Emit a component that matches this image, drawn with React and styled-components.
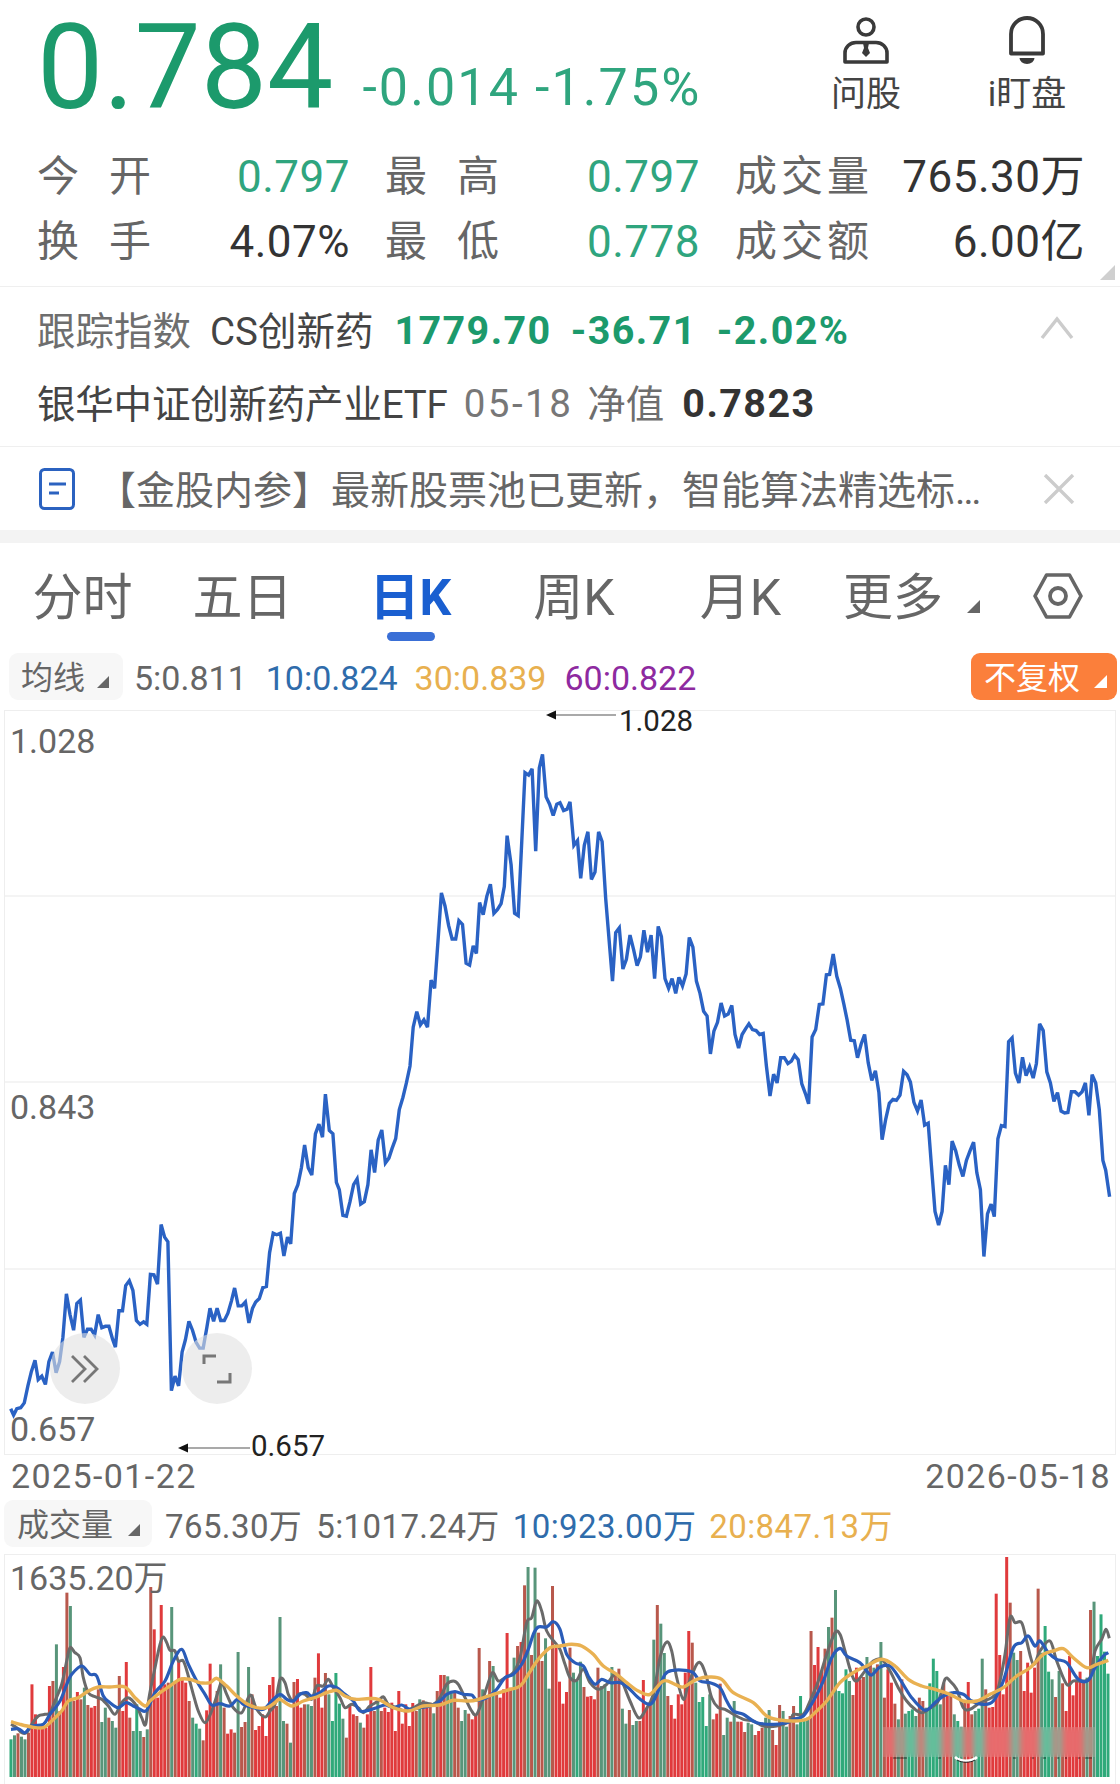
import React from "react";
import styled, { createGlobalStyle } from "styled-components";

const GlobalStyle = createGlobalStyle`
  html, body { margin: 0; padding: 0; background: #fff; }
  body { font-family: Roboto, "Noto Sans CJK SC", sans-serif; }
`;

const GREEN = "#2fa57e";
const DEEP_GREEN = "#1c9a6c";
const BLUE = "#2a62c4";

const priceA = [30,1462,38,1475,47,1462,58,1460,68,1450,78,1415,88,1385,98,1362,107,1402,117,1395,127,1412,137,1365,147,1345,157,1388,167,1365,176,1315,186,1225,196,1268,206,1300,215,1245,225,1238,235,1315,245,1298,255,1298,265,1310,275,1268,285,1295,295,1292,305,1292,315,1318,323,1335,333,1260,343,1260,352,1208,362,1198,372,1218,382,1280,392,1288,402,1283,411,1288,421,1185,431,1186,441,1205,451,1082,461,1108,470,1118,480,1425,490,1395,500,1415,510,1345,519,1320,529,1282,539,1300,549,1325,559,1337,569,1337,579,1295,588,1255,598,1282,608,1255,618,1280,628,1280,638,1265,648,1240,657,1213,667,1250,677,1250,687,1242,697,1285,707,1255,716,1242,726,1235,736,1212,746,1210,755,1140,765,1100,775,1103,785,1100,795,1147,805,1108,814,1122,824,1018,834,1000,844,965,853,918,863,965,873,980,883,895,893,875,903,902,911,813,922,888,932,895,942,995,950,1010,960,1063,970,1065,980,1035,990,1000,1000,988,1010,1040,1020,1035,1030,1000,1039,928,1049,975,1059,908,1069,887,1079,955,1089,945,1098,925,1108,905,1118,845,1128,820,1138,790,1148,755,1157,675,1167,643,1177,670,1187,660,1197,675,1207,578,1217,595,1226,500,1236,398,1246,425,1256,465,1266,493,1276,493,1285,455,1295,463,1305,543,1315,547,1325,507,1334,523,1343,418,1353,443,1363,405,1373,380,1383,440,1393,432,1403,420,1412,385,1420,280,1431,340,1441,440,1451,445,1461,290,1470,150,1480,155,1490,142,1500,312,1510,140,1519,112,1529,200,1539,215,1549,238,1559,215];
const priceB = [0,212,10,228,20,225,28,210,39,300,49,290,58,368,68,300,78,272,88,370,98,355,108,272,118,292,128,410,137,490,147,580,156,480,166,470,176,555,186,535,196,485,206,515,216,548,225,530,235,475,245,520,255,485,265,575,275,467,284,488,294,575,304,595,314,575,324,605,333,572,343,590,353,565,362,490,372,510,382,580,392,605,402,642,412,652,421,730,431,683,441,665,451,625,461,652,471,648,481,630,490,690,500,718,510,690,520,678,529,668,539,680,549,682,559,690,569,688,578,755,588,817,598,772,608,790,618,738,628,738,638,750,648,745,657,733,667,742,677,792,687,812,696,833,706,695,716,680,726,628,736,627,746,567,755,566,765,524,775,570,785,595,795,628,804,660,814,702,824,703,833,738,843,710,853,690,863,748,873,785,883,765,893,810,902,907,912,865,922,832,932,824,942,826,952,815,962,766,972,773,981,788,991,830,1001,848,1011,825,1021,877,1031,873,1040,960,1050,1055,1060,1083,1070,1055,1079,960,1089,1000,1098,910,1108,930,1118,960,1128,983,1138,950,1148,930,1158,912,1167,975,1177,1010,1187,1148,1197,1060,1207,1040,1216,1066,1226,905,1236,878,1246,880,1256,705,1266,697,1275,770,1285,790,1295,737,1305,775,1315,757,1325,780,1334,750,1343,668,1353,682,1363,767,1373,790,1383,828,1393,810,1403,848,1413,852,1422,851,1432,808,1442,808,1452,815,1462,808,1471,790,1481,857,1490,773,1500,790,1510,845,1520,950,1528,970,1539,1025];

const pricePoints = [];
for (let i = 0; i < priceA.length; i += 2) pricePoints.push(`${(priceA[i] / 2.8).toFixed(1)},${(700 + priceA[i + 1] / 2.063).toFixed(1)}`);
for (let i = 0; i < priceB.length; i += 2) pricePoints.push(`${(560 + priceB[i] / 2.8).toFixed(1)},${(700 + priceB[i + 1] / 2.063).toFixed(1)}`);

// bar tops as read in 3x crops of the volume panel; negative means a falling (green) day
const bars = [
  -565,-553,547,-557,-565,545,400,490,525,525,530,405,390,-280,480,348,125,-165,450,423,445,-410,462,470,465,415,-513,-470,500,-510,-530,375,480,333,500,-540,-460,-540,558,-535,108,235,440,162,400,395,-168,390,330,380,395,450,-500,-518,-533,568,478,338,460,420,-340,470,548,535,545,-303,528,513,-348,430,537,525,490,555,402,378,465,-198,
  -510,518,-575,393,384,470,460,-460,-465,380,307,470,366,-430,-510,-366,-458,-503,560,460,490,495,-515,530,490,348,480,-450,480,470,483,455,540,420,518,460,525,456,480,-445,448,455,455,-487,420,372,372,-376,-420,420,470,-510,-477,488,505,490,291,-415,435,330,-345,430,440,415,246,410,-320,285,273,103,-48,312,-50,245,330,-262,-413,105,290,392,
  458,423,290,-365,-390,-332,408,437,435,445,350,-405,-400,420,-348,375,353,-473,-518,477,-522,-510,510,387,470,458,-266,162,-218,-306,435,462,503,430,460,365,240,275,-395,-453,-438,-525,-430,505,488,398,-552,-500,512,-450,512,512,543,-515,-520,552,540,530,-500,-477,537,582,462,-480,-527,495,465,-520,-435,-510,-500,240,342,288,360,293,-228,200,-117,-420,
  -427,-355,-390,432,350,385,378,-318,340,-350,340,-273,440,355,395,458,-505,385,-488,-480,-475,-495,440,450,-470,-397,-323,-360,-460,395,435,430,-490,-510,-527,455,393,490,-480,-473,-323,415,470,468,128,312,430,18,155,-305,-327,300,420,335,425,350,113,-305,-225,-362,-385,438,-360,397,480,315,433,390,362,395,-380,177,-152,-315,-190,-302,-368,
];
const BAR_START = 11;
const BAR_PITCH = (1108 - BAR_START) / (bars.length - 1);

// colour bleeds between neighbouring bars of opposite direction in the reference
function barColour(i) {
  const down = bars[i] < 0;
  const mixed = (bars[i - 1] !== undefined && bars[i - 1] < 0 !== down) || (bars[i + 1] !== undefined && bars[i + 1] < 0 !== down);
  if (down) return mixed ? "#58957a" : "#2fa97a";
  return mixed ? "#b8584c" : "#e03a3c";
}

const volGray = [
  [33,520,50,530,65,545,80,545,95,520,115,495,135,490,150,485,165,450,185,400,200,330,210,290,225,305,240,320,250,380,265,425,285,437,305,445,325,465,345,490,365,455,385,440,410,465,425,500,437,520,447,440,465,350,480,280,490,258,500,275,510,298,525,300,535,330,550,330,565,375,580,430,595,480,615,515,635,480,655,420,665,395,680,430,700,470,725,485,745,440,755,435,770,475,795,498,810,480,825,460],
  [0,385,15,395,25,430,40,450,55,430,75,430,95,445,110,405,130,405,145,385,160,410,180,440,195,470,215,460,235,470,250,485,270,465,295,450,310,437,325,460,350,470,375,480,400,470,430,455,460,460,480,440,500,400,520,390,535,400,555,440,575,480,590,490,610,440,630,380,640,365,655,390,675,380,700,365,720,320,740,215,755,200,770,150,785,180,800,240,825,275],
  [0,295,15,340,30,380,50,388,70,355,90,395,115,415,140,400,165,370,185,390,210,450,235,500,255,480,280,430,300,320,320,273,335,300,350,380,370,445,385,400,410,340,425,340,440,380,455,440,475,470,495,475,520,490,550,505,580,510,610,525,650,525,690,510,700,490,730,490,750,450,775,390,800,310,825,245],
  [0,250,15,300,35,370,50,390,75,360,100,330,125,325,150,360,175,410,200,450,225,475,245,485,265,475,295,450,315,385,330,390,350,415,370,470,390,475,420,455,455,440,475,410,495,310,510,200,525,215,545,215,560,270,580,340,600,300,630,270,650,330,680,400,700,390,725,390,750,380,765,300,785,265,798,235,808,262],
];
const volBlue = [
  [33,535,55,533,75,545,95,525,130,520,150,490,180,450,200,400,215,370,245,345,270,370,290,375,310,435,330,455,355,470,378,455,400,465,420,475,440,478,465,425,495,390,520,330,545,295,565,340,590,390,615,430,635,462,660,458,690,465,712,445,730,460,760,470,790,475,815,450],
  [0,430,20,445,40,450,60,430,80,425,95,435,120,425,145,405,170,410,195,430,220,450,240,480,265,478,290,470,315,462,340,470,365,462,390,475,420,470,450,465,480,450,500,430,525,422,550,430,575,432,590,447,620,440,650,415,675,380,700,370,725,340,745,295,760,250,775,228,800,228,820,212],
  [0,235,20,310,45,335,70,345,85,375,105,400,125,385,150,395,180,395,205,410,235,440,270,460,290,430,315,370,340,358,375,358,400,365,420,390,450,395,480,410,500,450,520,480,550,490,590,515,640,520,680,515,700,505,730,495,760,450,790,390,815,320],
  [0,292,20,315,60,335,80,360,95,372,120,348,150,345,180,385,215,440,255,478,285,455,310,435,340,425,370,430,395,450,430,460,460,450,490,390,520,290,545,275,565,255,585,285,600,270,625,305,650,325,680,335,715,385,745,388,765,350,790,315,805,305],
];
const volOrange = [
  [33,512,60,520,95,528,130,530,155,510,185,480,205,450,235,440,265,420,295,408,330,408,375,408,405,440,435,465,450,450,480,425,510,405,540,385,570,385,600,395,630,395,650,382,680,405,710,435,740,458,770,470,800,470,825,455],
  [0,445,35,465,70,450,110,438,140,425,170,418,195,435,225,445,260,443,295,445,340,470,385,480,430,465,480,462,520,448,560,450,590,447,640,430,680,418,720,405,745,370,775,325,810,290],
  [0,285,35,280,65,285,100,310,130,345,170,370,200,395,235,420,270,430,310,390,345,400,370,408,410,385,450,378,485,385,520,425,580,455,620,495,660,507,700,510,740,505,770,480,800,450],
  [0,395,40,365,80,345,125,325,165,345,205,385,245,405,285,415,330,430,370,450,410,450,450,430,490,410,530,375,570,350,610,310,640,300,670,293,700,320,740,350,770,340,805,328],
];

function smoothPath(crops) {
  const pts = [];
  crops.forEach((crop, c) => {
    for (let i = 0; i < crop.length; i += 2) pts.push([c * 280 + crop[i] / 3, 1550 + crop[i + 1] / 3]);
  });
  let d = `M${pts[0][0].toFixed(1)} ${pts[0][1].toFixed(1)}`;
  for (let i = 0; i < pts.length - 1; i++) {
    const p0 = pts[Math.max(i - 1, 0)], p1 = pts[i], p2 = pts[i + 1], p3 = pts[Math.min(i + 2, pts.length - 1)];
    const c1 = [p1[0] + (p2[0] - p0[0]) / 6, p1[1] + (p2[1] - p0[1]) / 6];
    const c2 = [p2[0] - (p3[0] - p1[0]) / 6, p2[1] - (p3[1] - p1[1]) / 6];
    d += `C${c1[0].toFixed(1)} ${c1[1].toFixed(1)} ${c2[0].toFixed(1)} ${c2[1].toFixed(1)} ${p2[0].toFixed(1)} ${p2[1].toFixed(1)}`;
  }
  return d;
}

const Page = styled.div`
  width: 1120px;
  height: 1784px;
  overflow: hidden;
  position: relative;
  background: #fff;
  color: #333;
`;

const HeadRow = styled.header`
  height: 144px;
  display: flex;
  align-items: flex-start;
  padding-left: 37px;
`;
const Price = styled.div`
  flex: none;
  font-size: 118px;
  line-height: 136px;
  color: ${DEEP_GREEN};
`;
const Change = styled.div`
  flex: none;
  margin: 58px 0 0 29px;
  font-size: 52px;
  line-height: 60px;
  color: ${GREEN};
  letter-spacing: 2.1px;
  white-space: pre;
`;
const QuickActions = styled.div`
  margin-left: auto;
  display: flex;
`;
const QuickAction = styled.div`
  width: ${(p) => p.$w}px;
  display: flex;
  flex-direction: column;
  align-items: center;
  padding-top: 15px;
  font-size: 35px;
  line-height: 46px;
  color: #444;
  svg { display: block; margin-bottom: 7px; }
`;

const Stats = styled.section`
  position: relative;
  height: 142px;
  border-bottom: 1px solid #efefef;
  box-sizing: content-box;
  padding: 0 37px;
  display: grid;
  grid-template-columns: 310px 312px 347px;
  column-gap: 38px;
  grid-auto-rows: 65px;
`;
const Stat = styled.div`
  display: flex;
  align-items: center;
  justify-content: space-between;
  white-space: nowrap;
`;
const StatLabel = styled.span`
  width: ${(p) => (p.$wide ? 134 : 114)}px;
  margin-bottom: 8px;
  font-size: 42px;
  color: #666;
  text-align-last: justify;
`;
const StatValue = styled.span`
  font-size: 44px;
  line-height: 52px;
  letter-spacing: 0.5px;
  margin-right: -3px;
  color: ${(p) => (p.$green ? GREEN : "#333")};
`;
const Corner = styled.i`
  position: absolute;
  display: block;
  right: ${(p) => p.$right}px;
  bottom: ${(p) => p.$bottom}px;
  width: ${(p) => p.$size}px;
  height: ${(p) => p.$size}px;
  background: ${(p) => p.$color};
  clip-path: polygon(100% 0, 100% 100%, 0 100%);
`;

const IndexBlock = styled.section`
  height: 160px;
  padding: 7px 37px 0;
  box-sizing: border-box;
  border-bottom: 1px solid #efefef;
`;
const IndexRow = styled.div`
  height: 73px;
  display: flex;
  align-items: center;
  font-size: 38.5px;
  white-space: pre;
`;
const Words = styled.span`
  color: ${(p) => p.$color || "#6e6e6e"};
  margin-left: ${(p) => p.$ml || 0}px;
  margin-bottom: ${(p) => (p.$digits ? 0 : 6)}px;
  letter-spacing: ${(p) => p.$ls || 0}px;
`;
const Figure = styled.b`
  font-weight: 700;
  font-size: 39.5px;
  margin-left: ${(p) => p.$ml || 0}px;
  color: ${(p) => p.$color};
  letter-spacing: 1.4px;
`;
const Chevron = styled.svg`
  margin-left: auto;
  margin-right: 8px;
  margin-bottom: 6px;
`;

const Notice = styled.section`
  height: 83px;
  box-sizing: border-box;
  padding-left: 39px;
  display: flex;
  align-items: center;
  font-size: 39px;
  color: #666;
  white-space: nowrap;
`;
const NoticeText = styled.span`
  margin: 0 0 4px 22px;
  width: 946px;
`;
const Band = styled.div`
  height: 13px;
  background: #f3f3f3;
`;

const Tabs = styled.nav`
  position: relative;
  height: 102px;
  display: grid;
  grid-template-columns: 165px 155px 181px 146px 187px 199px 1fr;
  align-items: center;
  font-size: 50px;
  padding-bottom: 2px;
  box-sizing: border-box;
  color: #666;
`;
const Tab = styled.div`
  position: relative;
  text-align: ${(p) => (p.$left ? "left" : "center")};
  padding-left: ${(p) => (p.$left ? 9 : 0)}px;
  color: ${(p) => (p.$active ? "#1a5fd0" : "#666")};
  font-weight: ${(p) => (p.$active ? 700 : 400)};
`;
const ActiveBar = styled.i`
  position: absolute;
  left: 50%;
  bottom: -12px;
  transform: translateX(-50%);
  width: 48px;
  height: 9px;
  border-radius: 5px;
  background: #3a6fd6;
`;
const SettingsIcon = styled.svg`
  display: block;
  margin-top: 6px;
`;

const Legend = styled.div`
  height: 47px;
  display: flex;
  align-items: center;
  padding-left: ${(p) => p.$pl}px;
  font-size: ${(p) => p.$fs}px;
  margin-top: ${(p) => p.$mt}px;
  white-space: nowrap;
`;
const Chip = styled.div`
  position: relative;
  width: ${(p) => p.$w}px;
  height: 47px;
  box-sizing: border-box;
  padding: 0 0 4px ${(p) => p.$pl}px;
  margin-right: ${(p) => p.$mr}px;
  display: flex;
  align-items: center;
  background: #f7f7f7;
  border-radius: 9px;
  color: #666;
  font-size: 32px;
`;
const Reading = styled.span`
  color: ${(p) => p.$color};
  margin-right: ${(p) => p.$mr}px;
  margin-top: ${(p) => p.$dy || 0}px;
  letter-spacing: ${(p) => p.$ls || 0}px;
`;
const AdjustButton = styled.div`
  position: relative;
  margin-left: auto;
  margin-right: 3px;
  width: 146px;
  height: 47px;
  box-sizing: border-box;
  padding: 0 0 4px 13px;
  display: flex;
  align-items: center;
  color: #fff;
  font-size: 32px;
  background: #fb7f3b;
  border-radius: 9px;
`;

const ChartPanel = styled.div`
  position: relative;
  margin: 10px 4px 0;
  height: 745px;
  box-sizing: border-box;
  border: 1px solid #eeeeee;
`;
const ChartSvg = styled.svg`
  position: absolute;
  left: -1px;
  top: -1px;
  display: block;
`;
const AxisLabel = styled.span`
  position: absolute;
  left: ${(p) => p.$x}px;
  top: ${(p) => p.$y}px;
  font-size: 34px;
  line-height: 36px;
  color: #666;
`;
const Mark = styled.span`
  position: absolute;
  left: ${(p) => p.$x}px;
  top: ${(p) => p.$y}px;
  font-size: 29.5px;
  line-height: 34px;
  color: #222;
`;
const RoundButton = styled.div`
  position: absolute;
  left: ${(p) => p.$x}px;
  top: ${(p) => p.$y}px;
  width: 70px;
  height: 71px;
  border-radius: 50%;
  background: rgba(225, 225, 225, 0.6);
  display: flex;
  align-items: center;
  justify-content: center;
`;

const Dates = styled.div`
  height: 42px;
  margin-bottom: 3px;
  padding: 0 9px 0 11px;
  display: flex;
  align-items: center;
  justify-content: space-between;
  font-size: 34px;
  letter-spacing: 1.4px;
  color: #666;
`;

const VolumePanel = styled.div`
  position: relative;
  margin: 7px 4px 0;
  height: 231px;
  box-sizing: border-box;
  border: 1px solid #eeeeee;
  border-bottom: none;
`;
const Smudge = styled.div`
  position: absolute;
  left: 878px;
  top: 172px;
  width: 212px;
  height: 30px;
  background: rgba(255, 255, 255, 0.12);
  backdrop-filter: blur(2.5px);
`;

function PersonIcon() {
  return (
    <svg width="48" height="50" viewBox="0 0 48 50">
      <circle cx="24" cy="12" r="8" fill="none" stroke="#3a3a3a" strokeWidth="3.6" />
      <path d="M3 47 V38 C3 32 8 27.5 14 27.5 H34 C40 27.5 45 32 45 38 V47 Z" fill="none" stroke="#3a3a3a" strokeWidth="3.6" strokeLinejoin="round" />
      <path d="M21 28 H27 L26 33 L28 38 L24 42 L20 38 L22 33 Z" fill="#3a3a3a" />
    </svg>
  );
}
function BellIcon() {
  return (
    <svg width="38" height="50" viewBox="0 0 38 50">
      <path d="M3 38.5 V19 A16 16 0 0 1 35 19 V38.5 Z" fill="none" stroke="#3a3a3a" strokeWidth="3.8" strokeLinejoin="round" />
      <path d="M11.5 43 H26.5 A7.5 6 0 0 1 11.5 43 Z" fill="#3a3a3a" />
    </svg>
  );
}
function DocIcon() {
  return (
    <svg width="36" height="42" viewBox="0 0 36 42">
      <rect x="1.5" y="1.5" width="33" height="39" rx="4" fill="none" stroke="#2b62c0" strokeWidth="3" />
      <path d="M10 16 H27 M10 25 H20" stroke="#2b62c0" strokeWidth="3" />
    </svg>
  );
}
function HexIcon() {
  return (
    <SettingsIcon width="50" height="46" viewBox="0 0 50 46">
      <path d="M2 23 L13.5 2 H36.5 L48 23 L36.5 44 H13.5 Z" fill="none" stroke="#666" strokeWidth="3.6" strokeLinejoin="round" />
      <circle cx="25" cy="23" r="8" fill="none" stroke="#666" strokeWidth="3.8" />
    </SettingsIcon>
  );
}

const priceChart = (
  <ChartSvg width="1112" height="745" viewBox="4 710 1112 745">
    <path d="M5 896H1115M5 1082H1115M5 1269H1115" stroke="#e9e9e9" strokeWidth="1.2" />
    <polyline points={pricePoints.join(" ")} fill="none" stroke={BLUE} strokeWidth="3.4" strokeLinejoin="miter" strokeMiterlimit="3" />
    <path d="M556 715H616" stroke="#555" strokeWidth="1.2" />
    <path d="M546 715L556 710.5V719.5Z" fill="#111" />
    <path d="M188 1448H250" stroke="#555" strokeWidth="1.2" />
    <path d="M178 1448L188 1443.5V1452.5Z" fill="#111" />
  </ChartSvg>
);

const volumeChart = (
  <ChartSvg width="1112" height="231" viewBox="4 1553 1112 231">
    {bars.map((top, i) => {
      const y = 1550 + Math.abs(top) / 3;
      return <rect key={i} x={BAR_START + i * BAR_PITCH - 1.5} y={y} width="3" height={1776 - y} fill={barColour(i)} />;
    })}
    <path d={smoothPath(volGray)} fill="none" stroke="#6a6a6a" strokeWidth="3" />
    <path d={smoothPath(volBlue)} fill="none" stroke="#2a5cb8" strokeWidth="3.2" />
    <path d={smoothPath(volOrange)} fill="none" stroke="#e9b152" strokeWidth="3.4" />
  </ChartSvg>
);

const volumeSpecks = (
  <ChartSvg width="1112" height="231" viewBox="4 1553 1112 231">
    <path d="M893 1757H907M938 1757H941M1013 1757H1016M1032 1757H1034M1043 1757H1046M1057 1757H1059M1065 1757H1067M1078 1757H1080M1085 1757H1092" stroke="#111" strokeWidth="1" opacity="0.7" />
    <path d="M955 1756 C960 1761 972 1761 977 1756" fill="none" stroke="#fff" strokeWidth="2.6" />
    <path d="M957 1759 C962 1762 970 1762 975 1759" fill="none" stroke="#222" strokeWidth="1" />
  </ChartSvg>
);

export default function App() {
  return (
    <Page>
      <GlobalStyle />
      <HeadRow>
        <Price>0.784</Price>
        <Change>-0.014 -1.75%</Change>
        <QuickActions>
          <QuickAction $w={136}><PersonIcon />问股</QuickAction>
          <QuickAction $w={186}><BellIcon />i盯盘</QuickAction>
        </QuickActions>
      </HeadRow>

      <Stats>
        <Stat><StatLabel>今 开</StatLabel><StatValue $green>0.797</StatValue></Stat>
        <Stat><StatLabel>最 高</StatLabel><StatValue $green>0.797</StatValue></Stat>
        <Stat><StatLabel $wide>成交量</StatLabel><StatValue>765.30万</StatValue></Stat>
        <Stat><StatLabel>换 手</StatLabel><StatValue>4.07%</StatValue></Stat>
        <Stat><StatLabel>最 低</StatLabel><StatValue $green>0.778</StatValue></Stat>
        <Stat><StatLabel $wide>成交额</StatLabel><StatValue>6.00亿</StatValue></Stat>
        <Corner $right={5} $bottom={6} $size={15} $color="#cfcfcf" />
      </Stats>

      <IndexBlock>
        <IndexRow>
          <Words>跟踪指数</Words>
          <Words $color="#444" $ml={19}>CS创新药</Words>
          <Figure $ml={21} $color={DEEP_GREEN}>1779.70</Figure>
          <Figure $ml={19} $color={DEEP_GREEN}>-36.71</Figure>
          <Figure $ml={20} $color={DEEP_GREEN}>-2.02%</Figure>
          <Chevron width="36" height="24" viewBox="0 0 36 24">
            <path d="M3 22 L18 3 L33 22" fill="none" stroke="#ccc" strokeWidth="3.4" />
          </Chevron>
        </IndexRow>
        <IndexRow>
          <Words $color="#444" $ls={-0.2}>银华中证创新药产业ETF</Words>
          <Words $digits $color="#777" $ml={16} $ls={2.5}>05-18</Words>
          <Words $ml={14}>净值</Words>
          <Figure $ml={18} $color="#333">0.7823</Figure>
        </IndexRow>
      </IndexBlock>

      <Notice>
        <DocIcon />
        <NoticeText>【金股内参】最新股票池已更新，智能算法精选标…</NoticeText>
        <svg width="32" height="30" viewBox="0 0 32 30">
          <path d="M2 1 L30 29 M30 1 L2 29" stroke="#ccc" strokeWidth="3.4" />
        </svg>
      </Notice>
      <Band />

      <Tabs>
        <Tab>分时</Tab>
        <Tab>五日</Tab>
        <Tab $active>日K<ActiveBar /></Tab>
        <Tab>周K</Tab>
        <Tab>月K</Tab>
        <Tab $left>
          更多
          <Corner $right={53} $bottom={16} $size={13} $color="#666" />
        </Tab>
        <HexIcon />
      </Tabs>

      <Legend $pl={9} $mt={8} $fs={34}>
        <Chip $w={114} $pl={12} $mr={11}>
          均线
          <Corner $right={14} $bottom={12} $size={12} $color="#666" />
        </Chip>
        <Reading $color="#666" $mr={19} $dy={2}>5:0.811</Reading>
        <Reading $color="#2f6cab" $mr={17} $dy={2}>10:0.824</Reading>
        <Reading $color="#e8b04f" $mr={18} $dy={2}>30:0.839</Reading>
        <Reading $color="#8e2aa0" $mr={0} $dy={2}>60:0.822</Reading>
        <AdjustButton>
          不复权
          <Corner $right={10} $bottom={12} $size={13} $color="#fff" />
        </AdjustButton>
      </Legend>

      <ChartPanel>
        {priceChart}
        <AxisLabel $x={5} $y={12}>1.028</AxisLabel>
        <AxisLabel $x={5} $y={378}>0.843</AxisLabel>
        <AxisLabel $x={5} $y={700}>0.657</AxisLabel>
        <Mark $x={614} $y={-7}>1.028</Mark>
        <Mark $x={246} $y={718}>0.657</Mark>
        <RoundButton $x={45} $y={622}>
          <svg width="30" height="30" viewBox="0 0 30 30">
            <path d="M2 2 L15 15 L2 28 M14 2 L27 15 L14 28" fill="none" stroke="#777" strokeWidth="2.8" />
          </svg>
        </RoundButton>
        <RoundButton $x={177} $y={622}>
          <svg width="30" height="30" viewBox="0 0 30 30">
            <path d="M2 10 V2 H14 M28 19 V28 H15" fill="none" stroke="#777" strokeWidth="3" />
          </svg>
        </RoundButton>
      </ChartPanel>

      <Dates>
        <span>2025-01-22</span>
        <span>2026-05-18</span>
      </Dates>

      <Legend $pl={4} $mt={0} $fs={33}>
        <Chip $w={148} $pl={13} $mr={13}>
          成交量
          <Corner $right={12} $bottom={11} $size={12} $color="#666" />
        </Chip>
        <Reading $color="#666" $mr={14} $ls={0.4}>765.30万</Reading>
        <Reading $color="#666" $mr={13} $ls={0.4}>5:1017.24万</Reading>
        <Reading $color="#2f6cab" $mr={13} $ls={0.4}>10:923.00万</Reading>
        <Reading $color="#e8b04f" $mr={0} $ls={0.4}>20:847.13万</Reading>
      </Legend>

      <VolumePanel>
        {volumeChart}
        <AxisLabel $x={5} $y={5}>1635.20万</AxisLabel>
        <Smudge />
        {volumeSpecks}
      </VolumePanel>
    </Page>
  );
}
